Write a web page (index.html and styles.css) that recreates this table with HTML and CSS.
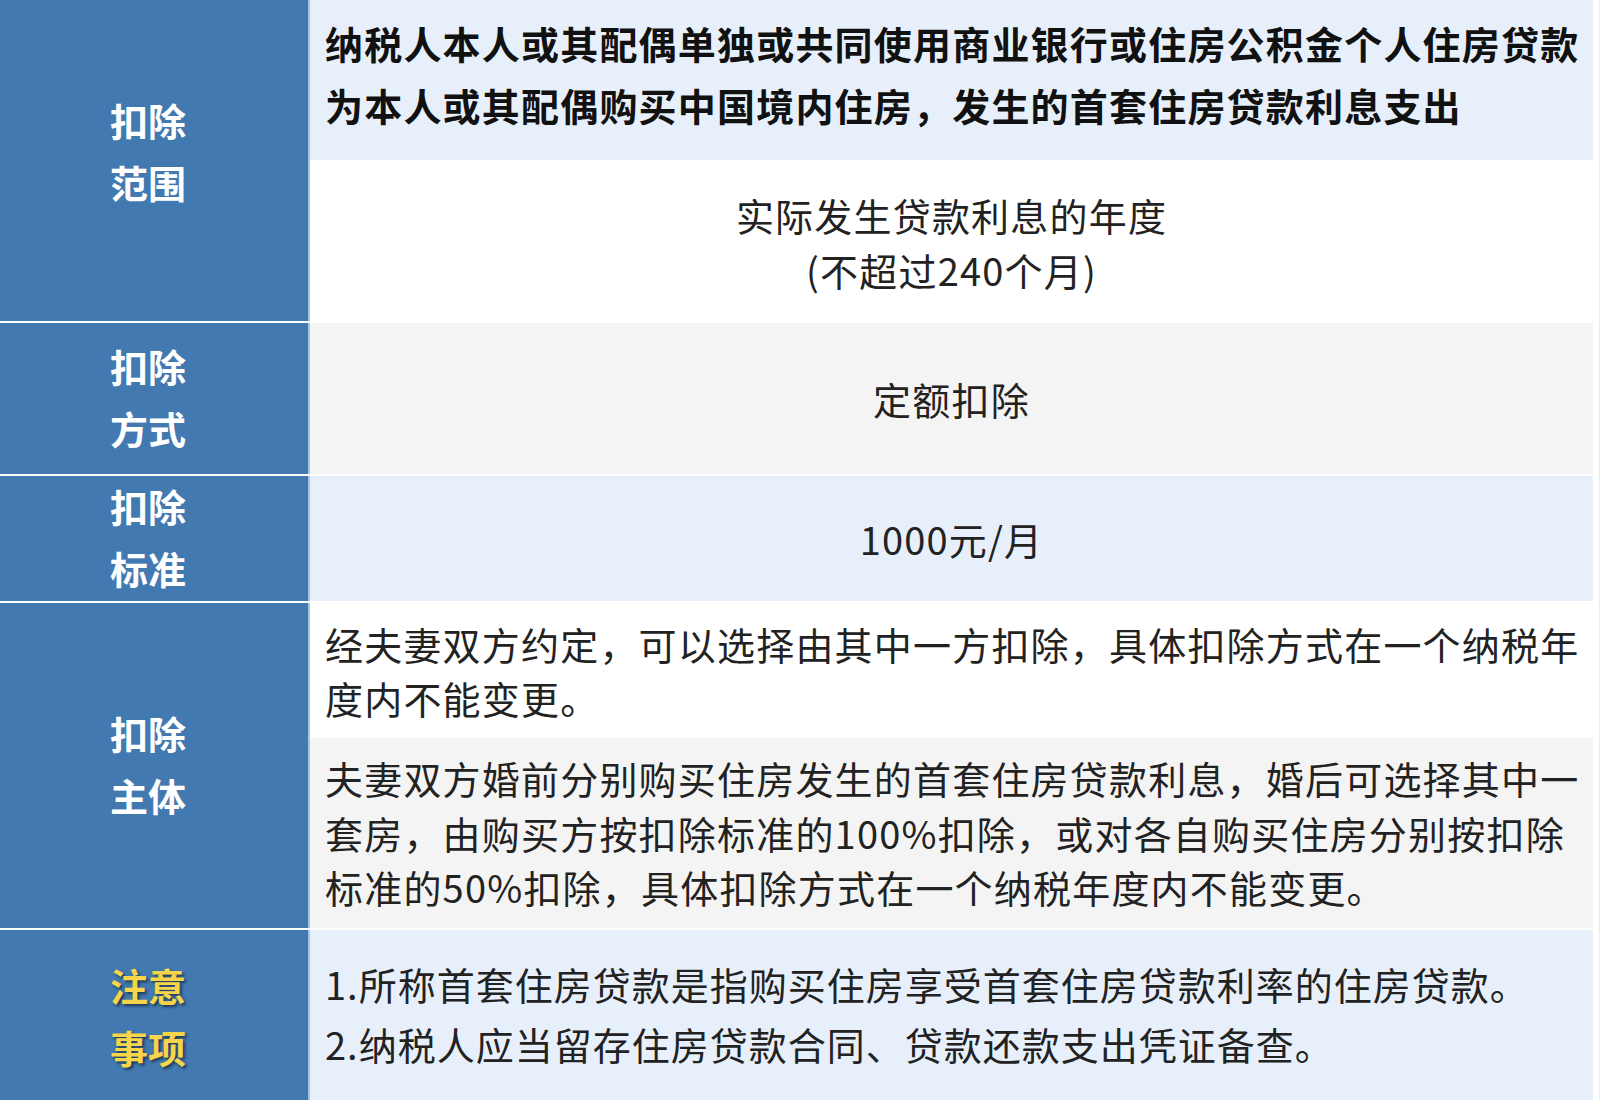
FILE: index.html
```html
<!DOCTYPE html>
<html lang="zh-CN">
<head>
<meta charset="utf-8">
<title>住房贷款利息</title>
<link rel="stylesheet" href="styles.css">
</head>
<body>
<div class="page">
  <div class="table">
    <div class="row r1">
      <div class="label"><span>扣除</span><span>范围</span></div>
      <div class="cells">
        <div class="cell blue bold top1">纳税人本人或其配偶单独或共同使用商业银行或住房公积金个人住房贷款为本人或其配偶购买中国境内住房，发生的首套住房贷款利息支出</div>
        <div class="cell white center mid1">实际发生贷款利息的年度<br>(不超过240个月)</div>
      </div>
    </div>
    <div class="row r2">
      <div class="label"><span>扣除</span><span>方式</span></div>
      <div class="cells">
        <div class="cell gray center full">定额扣除</div>
      </div>
    </div>
    <div class="row r3">
      <div class="label"><span>扣除</span><span>标准</span></div>
      <div class="cells">
        <div class="cell blue center full">1000元/月</div>
      </div>
    </div>
    <div class="row r4">
      <div class="label"><span>扣除</span><span>主体</span></div>
      <div class="cells">
        <div class="cell white left top4">经夫妻双方约定，可以选择由其中一方扣除，具体扣除方式在一个纳税年度内不能变更。</div>
        <div class="cell gray left bot4">夫妻双方婚前分别购买住房发生的首套住房贷款利息，婚后可选择其中一套房，由购买方按扣除标准的100%扣除，或对各自购买住房分别按扣除标准的50%扣除，具体扣除方式在一个纳税年度内不能变更。</div>
      </div>
    </div>
    <div class="row r5">
      <div class="label note"><span>注意</span><span>事项</span></div>
      <div class="cells">
        <div class="cell blue left notes"><p>1.所称首套住房贷款是指购买住房享受首套住房贷款利率的住房贷款。</p><p>2.纳税人应当留存住房贷款合同、贷款还款支出凭证备查。</p></div>
      </div>
    </div>
  </div>
</div>
</body>
</html>
```

FILE: styles.css
```css
html, body {
  margin: 0;
  padding: 0;
  background: #ffffff;
}
body {
  font-family: "Noto Sans CJK SC", "Noto Sans", sans-serif;
  width: 1602px;
  height: 1100px;
  overflow: hidden;
}
.page {
  width: 1599px;
  height: 1100px;
  border-right: 1px solid #ececec;
}
.table {
  width: 1593px;
  display: flex;
  flex-direction: column;
  gap: 2px;
}
.row {
  display: flex;
}
.r1 { height: 321px; }
.r2 { height: 151px; }
.r3 { height: 125px; }
.r4 { height: 325px; }
.r5 { height: 172px; }

.label {
  flex: none;
  background: #4279b1;
  border-right: 2px solid #a3c6ea;
  display: flex;
  flex-direction: column;
  align-items: center;
  justify-content: center;
  padding: 0 12px 4px 0;
  box-sizing: border-box;
  width: 310px;
  color: #ffffff;
  font-size: 38px;
  font-weight: 700;
  line-height: 62px;
}
.r1 .label { padding-bottom: 19px; }
.r5 .label { padding-bottom: 1px; }
.label.note {
  color: #f6d44b;
  text-shadow: 2px 2px 3px rgba(0, 0, 0, 0.55);
}
.cells {
  flex: 1;
  display: flex;
  flex-direction: column;
}
.cell {
  box-sizing: border-box;
  padding: 0 9px 0 15px;
  font-size: 38px;
  letter-spacing: 1.2px;
  color: #222222;
}
.cell p { margin: 0; }
.blue { background: #e7f0fa; }
.gray { background: #f4f4f4; }
.white { background: #ffffff; }
.bold {
  font-weight: 700;
  color: #111111;
}
.center {
  text-align: center;
  display: flex;
  align-items: center;
  justify-content: center;
  padding: 0 15px;
}
.full { flex: 1; }
.top1 {
  height: 160px;
  line-height: 62px;
  padding-top: 12px;
}
.mid1 {
  flex: 1;
  line-height: 55px;
  padding-top: 2px;
}
.left {
  display: flex;
  align-items: center;
  text-align: left;
}
.top4 {
  height: 135px;
  line-height: 54px;
}
.bot4 {
  flex: 1;
  line-height: 54.6px;
}
.notes {
  flex: 1;
  line-height: 60px;
  flex-direction: column;
  align-items: flex-start;
  justify-content: center;
  padding-bottom: 4px;
  letter-spacing: 1px;
}
```
